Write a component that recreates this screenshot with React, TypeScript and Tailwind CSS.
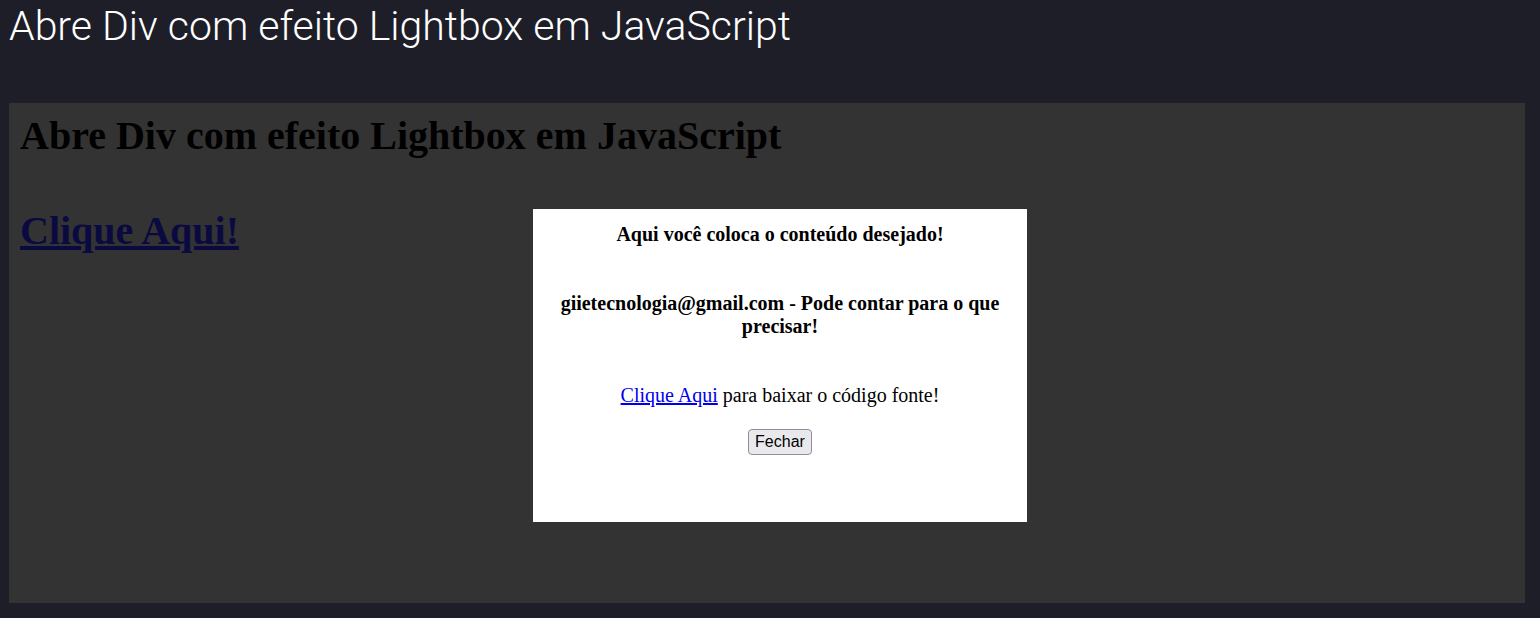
import React from "react";

function Lightbox() {
  return (
    <div className="absolute left-[533px] top-[209px] w-[494px] h-[313px] bg-white text-center text-black font-['Liberation_Serif',serif] pt-[13px]">
      <p className="text-[20px] leading-[24px] font-bold">Aqui você coloca o conteúdo desejado!</p>
      <p className="mt-[46px] px-[20px] text-[20px] leading-[23px] font-bold">
        giietecnologia@gmail.com - Pode contar para o que precisar!
      </p>
      <p className="mt-[45px] text-[20px] leading-[24px]">
        <a href="#" className="text-[#0000ee] underline">Clique Aqui</a> para baixar o código fonte!
      </p>
      <div className="mt-[22px]">
        <button className="h-[26px] px-[6px] text-[16px] leading-[20px] font-['Liberation_Sans',Arial,sans-serif] bg-[#e9e9ed] border border-[#8f8f9d] rounded-[4px] text-black">
          Fechar
        </button>
      </div>
    </div>
  );
}

export default function App() {
  return (
    <div className="relative w-[1540px] h-[618px] bg-[#1d1e28] overflow-hidden">
      <h1 className="pt-[3px] pl-[9px] text-[41px] font-light text-white font-['Roboto',sans-serif] leading-[47px]">
        Abre Div com efeito Lightbox em JavaScript
      </h1>
      <div className="mt-[53px] ml-[9px] w-[1516px] h-[500px] bg-[#333333] pt-[11px] pl-[11px] font-['Liberation_Serif',serif]">
        <h2 className="text-[40px] leading-[44px] font-bold text-black">Abre Div com efeito Lightbox em JavaScript</h2>
        <h2 className="mt-[51px] text-[40px] leading-[44px] font-bold">
          <a href="#" className="text-[#0a0a40] underline">Clique Aqui!</a>
        </h2>
      </div>
      <Lightbox />
    </div>
  );
}
